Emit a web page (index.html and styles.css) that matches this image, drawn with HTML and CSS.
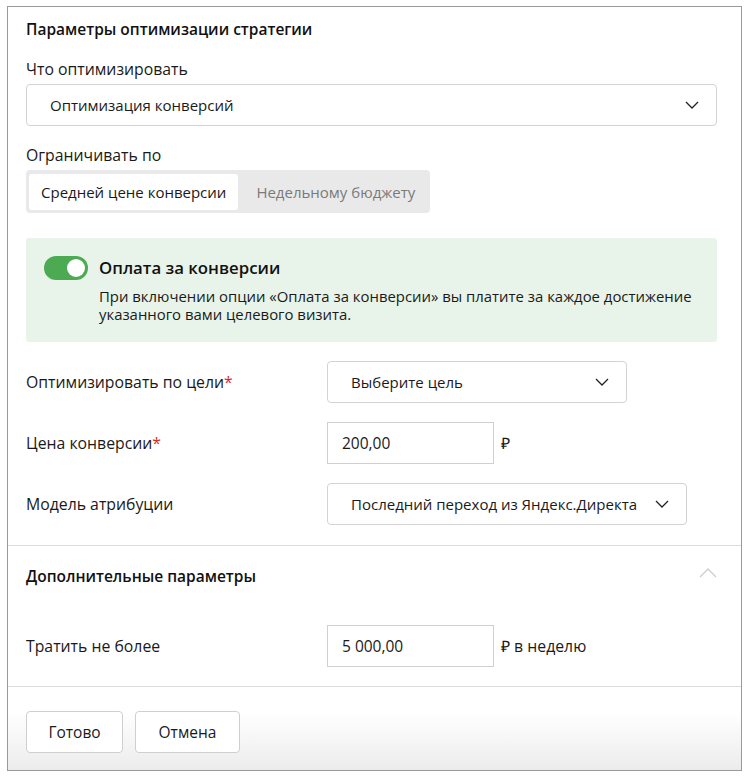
FILE: index.html
```html
<!DOCTYPE html>
<html lang="ru">
<head>
<meta charset="utf-8">
<link rel="stylesheet" href="styles.css">
</head>
<body>
<div class="frame">
  <div class="main">
    <div class="title">Параметры оптимизации стратегии</div>
    <div class="label">Что оптимизировать</div>
    <div class="select select-wide">
      <span>Оптимизация конверсий</span>
      <svg class="chev" width="14" height="8" viewBox="0 0 14 8"><path d="M1 1l6 6 6-6" fill="none" stroke="#222" stroke-width="1.3"/></svg>
    </div>
    <div class="label label-2">Ограничивать по</div>
    <div class="segments">
      <div class="seg seg-active">Средней цене конверсии</div>
      <div class="seg">Недельному бюджету</div>
    </div>
    <div class="promo">
      <div class="toggle"><div class="knob"></div></div>
      <div class="promo-body">
        <div class="promo-title">Оплата за конверсии</div>
        <div class="promo-text">При включении опции «Оплата за конверсии» вы платите за каждое достижение<br>указанного вами целевого визита.</div>
      </div>
    </div>
    <div class="rows">
      <div class="row">
        <div class="row-label">Оптимизировать по цели<span class="req">*</span></div>
        <div class="select select-goal">
          <span>Выберите цель</span>
          <svg class="chev" width="14" height="8" viewBox="0 0 14 8"><path d="M1 1l6 6 6-6" fill="none" stroke="#222" stroke-width="1.3"/></svg>
        </div>
      </div>
      <div class="row">
        <div class="row-label">Цена конверсии<span class="req">*</span></div>
        <div class="input">200,00</div>
        <div class="unit">₽</div>
      </div>
      <div class="row">
        <div class="row-label">Модель атрибуции</div>
        <div class="select select-attr">
          <span>Последний переход из Яндекс.Директа</span>
          <svg class="chev" width="14" height="8" viewBox="0 0 14 8"><path d="M1 1l6 6 6-6" fill="none" stroke="#222" stroke-width="1.3"/></svg>
        </div>
      </div>
    </div>
  </div>
  <div class="extra">
    <div class="extra-head">
      <div class="title">Дополнительные параметры</div>
      <svg class="chev-up" width="18" height="10" viewBox="0 0 18 10"><path d="M1 9l8-8 8 8" fill="none" stroke="#cfcfcf" stroke-width="1.4"/></svg>
    </div>
    <div class="row">
      <div class="row-label">Тратить не более</div>
      <div class="input">5 000,00</div>
      <div class="unit">₽ в неделю</div>
    </div>
  </div>
  <div class="footer">
    <button class="btn btn-ok">Готово</button>
    <button class="btn btn-cancel">Отмена</button>
  </div>
</div>
</body>
</html>
```
FILE: styles.css
```css
* { box-sizing: border-box; }
html, body { margin: 0; padding: 0; background: #fff; }
body {
  font-family: "Open Sans", "Liberation Sans", Arial, sans-serif;
  color: #1a1a1a;
  font-size: 15.8px;
}
.frame {
  margin: 6px 0 0 7px;
  width: 735px;
  height: 765px;
  border: 1px solid #9a9a9a;
  display: flex;
  flex-direction: column;
}
.main {
  padding: 12px 24px 20px 18px;
  border-bottom: 1px solid #dcdcdc;
}
.title {
  font-weight: 600;
  font-size: 15.5px;
  line-height: 20px;
  color: #111;
}
.label {
  margin-top: 20px;
  line-height: 20px;
}
.label-2 { margin-top: 19px; }
.select {
  margin-top: 5px;
  height: 42px;
  border: 1px solid #d3d3d3;
  border-radius: 4px;
  display: flex;
  align-items: center;
  justify-content: space-between;
  padding: 0 17px 0 23px;
  background: #fff;
  font-size: 15px;
}
.chev { flex: none; }
.segments {
  margin-top: 5px;
  display: inline-flex;
  background: #e9e9e9;
  border-radius: 4px;
  padding: 4px 3px 3px;
  gap: 6px;
  font-size: 15px;
}
.seg {
  height: 36px;
  line-height: 36px;
  padding: 0 12px;
  color: #7a7a7a;
  border-radius: 3px;
}
.seg-active {
  background: #fff;
  color: #1a1a1a;
}
.promo {
  margin-top: 25px;
  background: #e8f4ea;
  border-radius: 3px;
  padding: 18px 18px 19px 18px;
  display: flex;
  gap: 11px;
  height: 104px;
}
.toggle {
  flex: none;
  width: 44px;
  height: 24px;
  border-radius: 12px;
  background: #4caa53;
  position: relative;
}
.knob {
  position: absolute;
  right: 3px;
  top: 3px;
  width: 18px;
  height: 18px;
  border-radius: 50%;
  background: #fff;
}
.promo-title {
  font-weight: 600;
  font-size: 16.8px;
  line-height: 24px;
  color: #111;
}
.promo-text {
  margin-top: 7px;
  font-size: 14.9px;
  line-height: 18px;
  color: #1a1a1a;
  white-space: nowrap;
}
.rows {
  margin-top: 19px;
  display: flex;
  flex-direction: column;
  gap: 19px;
}
.row {
  display: flex;
  align-items: center;
  height: 42px;
}
.row-label {
  width: 301px;
  flex: none;
}
.req { color: #e0261a; }
.select-goal { margin-top: 0; width: 300px; }
.select-attr { margin-top: 0; width: 360px; padding-right: 17px; }
.input {
  width: 167px;
  height: 42px;
  border: 1px solid #d0d0d0;
  line-height: 40px;
  padding: 0 14px;
  font-size: 15.5px;
}
.unit { margin-left: 7px; }
.extra {
  padding: 20px 24px 19px 18px;
  border-bottom: 1px solid #dcdcdc;
}
.extra-head {
  display: flex;
  justify-content: space-between;
  align-items: center;
  margin-bottom: 39px;
}
.chev-up { margin-top: -6px; }
.footer {
  flex: 1;
  padding: 24px 18px 0;
  display: flex;
  gap: 12px;
  align-items: flex-start;
  background: linear-gradient(#fff 0%, #fff 30%, #ececec 100%);
}
.btn {
  height: 42px;
  border: 1px solid #cfcfcf;
  border-radius: 4px;
  background: #fff;
  font-family: inherit;
  font-size: 15.5px;
  color: #1a1a1a;
  padding: 0;
}
.btn-ok { width: 97px; }
.btn-cancel { width: 105px; }
```
